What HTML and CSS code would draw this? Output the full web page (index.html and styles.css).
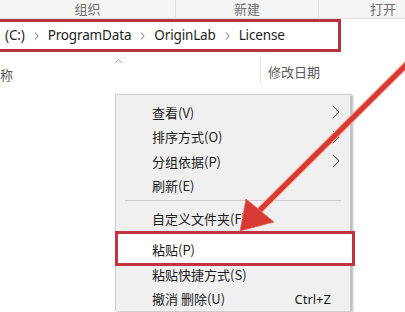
FILE: index.html
```html
<!DOCTYPE html>
<html lang="zh-CN">
<head>
    <meta charset="UTF-8">
    <meta name="viewport" content="width=device-width, initial-scale=1.0">
    <title>License</title>
    <link rel="stylesheet" href="styles.css">
</head>
<body>

    <div class="ribbon">
        <div class="group group-org">组织</div>
        <div class="group group-new">新建</div>
        <div class="group group-open">打开</div>
    </div>

    <div class="addr-bar">
        <span class="crumb">(C:)</span>
        <svg class="crumb-sep" width="5" height="8" viewBox="0 0 5 8"><path d="M1 0.5 L4 4 L1 7.5" fill="none" stroke="#8a8a8a" stroke-width="1.1"/></svg>
        <span class="crumb">ProgramData</span>
        <svg class="crumb-sep" width="5" height="8" viewBox="0 0 5 8"><path d="M1 0.5 L4 4 L1 7.5" fill="none" stroke="#8a8a8a" stroke-width="1.1"/></svg>
        <span class="crumb">OriginLab</span>
        <svg class="crumb-sep" width="5" height="8" viewBox="0 0 5 8"><path d="M1 0.5 L4 4 L1 7.5" fill="none" stroke="#8a8a8a" stroke-width="1.1"/></svg>
        <span class="crumb">License</span>
    </div>

    <div class="col-header">
        <div class="col col-name">
            <svg class="sort-caret" width="9" height="5" viewBox="0 0 9 5"><path d="M0.5 4.5 L4.5 0.8 L8.5 4.5" fill="none" stroke="#8a8a8a" stroke-width="1"/></svg>
            <span class="col-label name-label">名称</span>
        </div>
        <div class="col col-date">
            <span class="col-label">修改日期</span>
        </div>
    </div>

    <!-- context menu on the empty folder area -->
    <div class="context-menu">
        <div class="menu-item"><span>查看(V)</span><svg class="sub" width="8" height="14" viewBox="0 0 8 14"><path d="M0.8 0.8 L7 7 L0.8 13.2" fill="none" stroke="#444" stroke-width="1"/></svg></div>
        <div class="menu-item"><span>排序方式(O)</span><svg class="sub" width="8" height="14" viewBox="0 0 8 14"><path d="M0.8 0.8 L7 7 L0.8 13.2" fill="none" stroke="#444" stroke-width="1"/></svg></div>
        <div class="menu-item"><span>分组依据(P)</span><svg class="sub" width="8" height="14" viewBox="0 0 8 14"><path d="M0.8 0.8 L7 7 L0.8 13.2" fill="none" stroke="#444" stroke-width="1"/></svg></div>
        <div class="menu-item"><span>刷新(E)</span></div>
        <div class="menu-sep"></div>
        <div class="menu-item"><span>自定义文件夹(F)...</span></div>
        <div class="menu-sep sep-tight"></div>
        <div class="menu-item paste"><span>粘贴(P)</span></div>
        <div class="menu-item"><span>粘贴快捷方式(S)</span></div>
        <div class="menu-item"><span>撤消 删除(U)</span><span class="shortcut">Ctrl+Z</span></div>
    </div>

    <svg class="pointer-arrow" width="405" height="312" viewBox="0 0 405 312">
        <line x1="412" y1="59" x2="256" y2="214" stroke="#f3b0a8" stroke-width="7" stroke-linecap="round"/>
        <line x1="412" y1="59" x2="256" y2="214" stroke="#d63a32" stroke-width="5"/>
        <polygon points="240,231 246,199 274,222" fill="#d63a32" stroke="#e66a60" stroke-width="0.8" stroke-linejoin="round"/>
    </svg>

</body>
</html>
```

FILE: styles.css
```css
body {
    margin: 0;
    padding: 0;
    width: 405px;
    height: 312px;
    overflow: hidden;
    position: relative;
    background-color: #fff;
    font-family: 'Noto Sans', 'Noto Sans CJK SC', sans-serif;
    color: #222;
}

.ribbon {
    display: flex;
    height: 18px;
    background-color: #f5f5f5;
    border-bottom: 1px solid #e2e2e2;
}

.group {
    flex: none;
    font-family: 'Noto Sans CJK SC', sans-serif;
    font-size: 13px;
    line-height: 17px;
    color: #707070;
    text-align: center;
    border-right: 1px solid #e0e0e0;
}

.group-org {
    width: 175px;
}

.group-new {
    width: 142px;
}

.group-open {
    width: 128px;
    border-right: none;
}

.addr-bar {
    display: flex;
    align-items: center;
    box-sizing: border-box;
    width: 344px;
    height: 33px;
    margin-left: -3px;
    padding-left: 5px;
    border: 3px solid #b9313f;
    background-color: #fff;
}

.crumb {
    font-size: 13.5px;
    letter-spacing: -0.15px;
    color: #1e1e1e;
    padding-bottom: 1px;
}

.crumb-sep {
    margin: 0 9px 0 9px;
}

.col-header {
    display: flex;
    height: 42px;
}

.col {
    display: flex;
    flex-direction: column;
    font-family: 'Noto Sans CJK SC', sans-serif;
    font-size: 13px;
    color: #5a5a5a;
}

.col-name {
    width: 260px;
    border-right: 1px solid #e6e6e6;
    margin: 3px 0 10px;
}

.sort-caret {
    margin: 4px 0 0 114px;
}

.name-label {
    margin-left: -13px;
    margin-top: 2px;
}

.col-date {
    padding: 10px 0 0 7px;
}

.context-menu {
    position: absolute;
    left: 115px;
    top: 94px;
    z-index: 1;
    box-sizing: border-box;
    width: 236px;
    padding-top: 5px;
    background-color: #f0f0f0;
    border: 1px solid #c9c9c9;
    border-bottom: none;
    box-shadow: 2px 1px 2px rgba(0, 0, 0, 0.28);
}

.menu-item {
    display: flex;
    align-items: center;
    justify-content: space-between;
    height: 24.5px;
    padding: 0 10px 0 36px;
    font-family: 'Noto Sans CJK SC', sans-serif;
    font-size: 13px;
    color: #1c1c1c;
}

.shortcut {
    margin-right: 9px;
    font-family: 'Noto Sans', sans-serif;
}

.menu-sep {
    height: 1px;
    margin: 2px 9px 5px;
    background-color: #cdcdcd;
}

.sep-tight {
    margin: 2px 9px 4px;
}

.paste {
    position: relative;
}

.paste::after {
    content: "";
    position: absolute;
    top: -7px;
    bottom: -4px;
    left: -1px;
    right: -5px;
    border: 3px solid #c2323f;
    background-color: #fff;
}

.paste span {
    position: relative;
    z-index: 1;
}

.pointer-arrow {
    position: absolute;
    left: 0;
    top: 0;
    z-index: 2;
    pointer-events: none;
}
```
